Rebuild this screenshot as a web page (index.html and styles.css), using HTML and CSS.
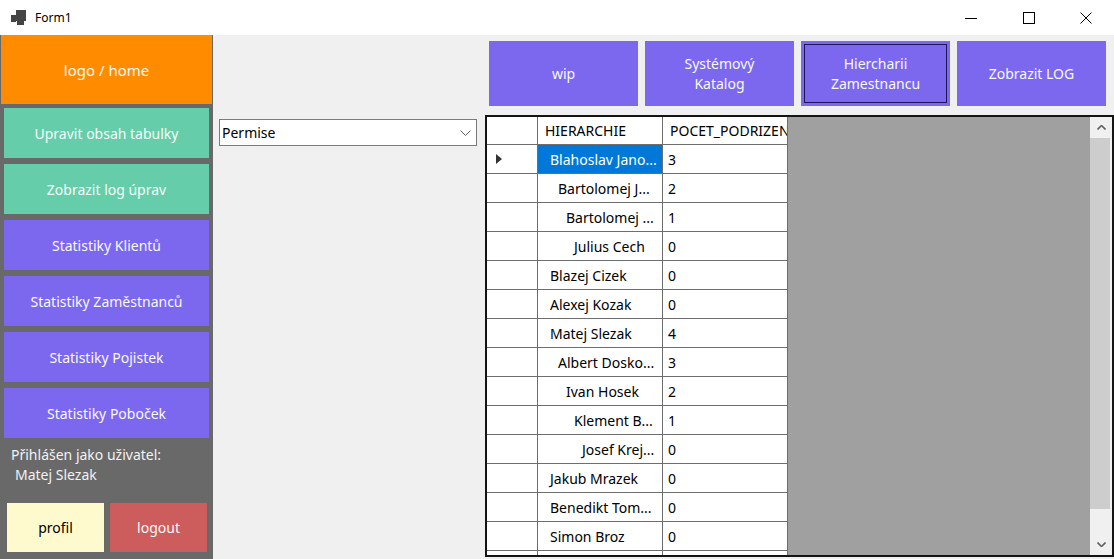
FILE: index.html
```html
<!DOCTYPE html>
<html lang="cs">
<head>
<meta charset="utf-8">
<title>Form1</title>
<link rel="stylesheet" href="styles.css">
</head>
<body>
<div class="window">
  <div class="titlebar">
    <svg class="app-icon" width="16" height="16" viewBox="0 0 16 16">
      <rect x="5" y="0" width="10" height="11" fill="#444"/>
      <rect x="0" y="5" width="5" height="7" fill="#444"/>
      <rect x="6" y="11" width="7" height="4" fill="#444"/>
    </svg>
    <span class="title">Form1</span>
    <div class="controls">
      <span class="ctl"><svg width="12" height="12" viewBox="0 0 12 12"><line x1="0" y1="6.5" x2="12" y2="6.5" stroke="#000" stroke-width="1"/></svg></span>
      <span class="ctl"><svg width="12" height="12" viewBox="0 0 12 12"><rect x="0.5" y="0.5" width="11" height="11" fill="none" stroke="#000" stroke-width="1"/></svg></span>
      <span class="ctl"><svg width="12" height="12" viewBox="0 0 12 12"><path d="M0.5 0.5 L11.5 11.5 M11.5 0.5 L0.5 11.5" stroke="#000" stroke-width="1"/></svg></span>
    </div>
  </div>
  <div class="client">
    <aside class="sidebar">
      <div class="logo">logo / home</div>
      <div class="nav">
        <div class="nav-btn green">Upravit obsah tabulky</div>
        <div class="nav-btn green">Zobrazit log úprav</div>
        <div class="nav-btn purple">Statistiky Klientů</div>
        <div class="nav-btn purple">Statistiky Zaměstnanců</div>
        <div class="nav-btn purple">Statistiky Pojistek</div>
        <div class="nav-btn purple">Statistiky Poboček</div>
      </div>
      <div class="user">
        <div class="user-label">Přihlášen jako uživatel:</div>
        <div class="user-name">Matej Slezak</div>
      </div>
      <div class="user-actions">
        <div class="act profil">profil</div>
        <div class="act logout">logout</div>
      </div>
    </aside>
    <main class="main">
      <div class="topbar">
        <div class="top-btn">wip</div>
        <div class="top-btn">Systémový<br>Katalog</div>
        <div class="top-btn focused">Hiercharii<br>Zamestnancu</div>
        <div class="top-btn">Zobrazit LOG</div>
      </div>
      <div class="content">
        <div class="combo">
          <span class="combo-text">Permise</span>
          <svg class="chevron" width="11" height="6" viewBox="0 0 11 6"><path d="M0.5 0.5 L5.5 5.5 L10.5 0.5" fill="none" stroke="#606060" stroke-width="1"/></svg>
        </div>
        <div class="grid">
          <div class="grid-area">
            <table class="dgv">
              <colgroup><col class="c-rh"><col class="c-h"><col class="c-n"></colgroup>
              <thead>
                <tr><th class="rh"></th><th>HIERARCHIE</th><th>POCET_PODRIZENYCH</th></tr>
              </thead>
              <tbody>
                <tr><td class="rh"><span class="cur"></span></td><td class="name l0 sel">Blahoslav Jano...</td><td>3</td></tr>
                <tr><td class="rh"></td><td class="name l1">Bartolomej J...</td><td>2</td></tr>
                <tr><td class="rh"></td><td class="name l2">Bartolomej ...</td><td>1</td></tr>
                <tr><td class="rh"></td><td class="name l3">Julius Cech</td><td>0</td></tr>
                <tr><td class="rh"></td><td class="name l0">Blazej Cizek</td><td>0</td></tr>
                <tr><td class="rh"></td><td class="name l0">Alexej Kozak</td><td>0</td></tr>
                <tr><td class="rh"></td><td class="name l0">Matej Slezak</td><td>4</td></tr>
                <tr><td class="rh"></td><td class="name l1">Albert Dosko...</td><td>3</td></tr>
                <tr><td class="rh"></td><td class="name l2">Ivan Hosek</td><td>2</td></tr>
                <tr><td class="rh"></td><td class="name l3">Klement B...</td><td>1</td></tr>
                <tr><td class="rh"></td><td class="name l4">Josef Krej...</td><td>0</td></tr>
                <tr><td class="rh"></td><td class="name l0">Jakub Mrazek</td><td>0</td></tr>
                <tr><td class="rh"></td><td class="name l0">Benedikt Tom...</td><td>0</td></tr>
                <tr><td class="rh"></td><td class="name l0">Simon Broz</td><td>0</td></tr>
                <tr><td class="rh"></td><td class="name l0"></td><td></td></tr>
              </tbody>
            </table>
          </div>
          <div class="scrollbar">
            <div class="sb-btn"><svg width="9" height="5" viewBox="0 0 9 5"><path d="M0.5 4.5 L4.5 0.5 L8.5 4.5" fill="none" stroke="#606060" stroke-width="1.6"/></svg></div>
            <div class="sb-thumb"></div>
            <div class="sb-track"></div>
            <div class="sb-btn"><svg width="9" height="5" viewBox="0 0 9 5"><path d="M0.5 0.5 L4.5 4.5 L8.5 0.5" fill="none" stroke="#606060" stroke-width="1.6"/></svg></div>
          </div>
        </div>
      </div>
    </main>
  </div>
</div>
</body>
</html>
```

FILE: styles.css
```css
* { box-sizing: border-box; }
html, body { margin: 0; padding: 0; }
body {
  font-family: "Noto Sans", "Open Sans", sans-serif;
  font-size: 14px;
  background: #f0f0f0;
}
.window {
  width: 1114px;
  height: 559px;
  background: #f0f0f0;
  display: flex;
  flex-direction: column;
  overflow: hidden;
}
.titlebar {
  height: 35px;
  background: #fff;
  display: flex;
  align-items: center;
  flex-shrink: 0;
}
.app-icon { margin-left: 11px; margin-top: 1px; }
.title {
  margin-left: 8px;
  font-size: 12px;
  color: #000;
}
.controls {
  margin-left: auto;
  display: flex;
  height: 100%;
}
.ctl {
  width: 58px;
  height: 100%;
  display: flex;
  align-items: center;
  justify-content: center;
}
.ctl:last-child { width: 56px; }
.client {
  flex: 1;
  display: flex;
  min-height: 0;
}
.sidebar {
  width: 213px;
  flex-shrink: 0;
  background: #696969;
  display: flex;
  flex-direction: column;
}
.logo {
  margin: 0 1px;
  height: 69px;
  background: #ff8c00;
  color: #f8f8f8;
  font-size: 15px;
  display: flex;
  align-items: center;
  justify-content: center;
}
.nav {
  margin-top: 4px;
  display: flex;
  flex-direction: column;
  gap: 6px;
}
.nav-btn {
  margin: 0 4px;
  height: 50px;
  display: flex;
  align-items: center;
  justify-content: center;
  color: #f4fff8;
}
.green { background: #66cdaa; }
.purple { background: #7b68ee; color: #f8f8ff; }
.user {
  margin-top: 7px;
  color: #f2f2f2;
  line-height: 20px;
  padding-left: 11px;
}
.user-name { padding-left: 4px; }
.user-actions {
  margin-top: 18px;
  display: flex;
  gap: 6px;
  padding-left: 7px;
}
.act {
  width: 97px;
  height: 49px;
  display: flex;
  align-items: center;
  justify-content: center;
}
.profil { background: #fffacd; color: #000; }
.logout { background: #cd5c5c; color: #f8f8f8; }
.main {
  flex: 1;
  display: flex;
  flex-direction: column;
  min-width: 0;
}
.topbar {
  display: flex;
  justify-content: flex-end;
  gap: 7px;
  padding: 6px 8px 0 0;
}
.top-btn {
  width: 149px;
  height: 65px;
  background: #7b68ee;
  color: #f8f8ff;
  display: flex;
  align-items: center;
  justify-content: center;
  text-align: center;
  line-height: 20px;
}
.top-btn.focused {
  outline: 1px solid #1e145a;
  outline-offset: -4px;
}
.content {
  margin-top: 9px;
  display: flex;
  align-items: flex-start;
}
.combo {
  margin-left: 6px;
  margin-top: 4px;
  width: 258px;
  height: 27px;
  background: #fff;
  border: 1px solid #7a7a7a;
  display: flex;
  align-items: center;
  padding-left: 2px;
  padding-right: 5px;
}
.combo-text { color: #000; }
.chevron { margin-left: auto; margin-top: 1px; }
.grid {
  margin-left: 8px;
  width: 629px;
  height: 442px;
  border: 2px solid #141414;
  display: flex;
  background: #a0a0a0;
}
.grid-area {
  flex: 1;
  overflow: hidden;
  min-width: 0;
}
.dgv {
  border-collapse: separate;
  border-spacing: 0;
  table-layout: fixed;
  width: 301px;
  background: #fff;
}
.c-rh { width: 51px; }
.c-h { width: 125px; }
.c-n { width: 125px; }
.dgv th, .dgv td {
  border-right: 1px solid #6e6e6e;
  border-bottom: 1px solid #6e6e6e;
  padding: 0;
  white-space: nowrap;
  overflow: hidden;
  text-align: left;
  font-weight: normal;
  color: #000;
}
.dgv th {
  height: 28px;
  padding-left: 7px;
}
.dgv th.rh { padding-left: 0; }
.dgv td {
  height: 29px;
  padding-left: 5px;
}
.dgv td.rh { padding-left: 0; }
.dgv td.name { padding-left: 12px; }
.dgv td.l1 { padding-left: 20px; }
.dgv td.l2 { padding-left: 28px; }
.dgv td.l3 { padding-left: 36px; }
.dgv td.l4 { padding-left: 44px; }
.dgv td.sel { background: #0078d7; color: #fff; }
.cur {
  display: block;
  width: 0;
  height: 0;
  margin-left: 9px;
  border-left: 6px solid #333;
  border-top: 5px solid transparent;
  border-bottom: 5px solid transparent;
}
.scrollbar {
  width: 22px;
  flex-shrink: 0;
  background: #f0f0f0;
  display: flex;
  flex-direction: column;
}
.sb-btn {
  height: 21px;
  display: flex;
  align-items: center;
  justify-content: center;
  flex-shrink: 0;
}
.sb-thumb {
  height: 371px;
  background: #cdcdcd;
  margin-right: 2px;
}
.sb-track { flex: 1; }
```
